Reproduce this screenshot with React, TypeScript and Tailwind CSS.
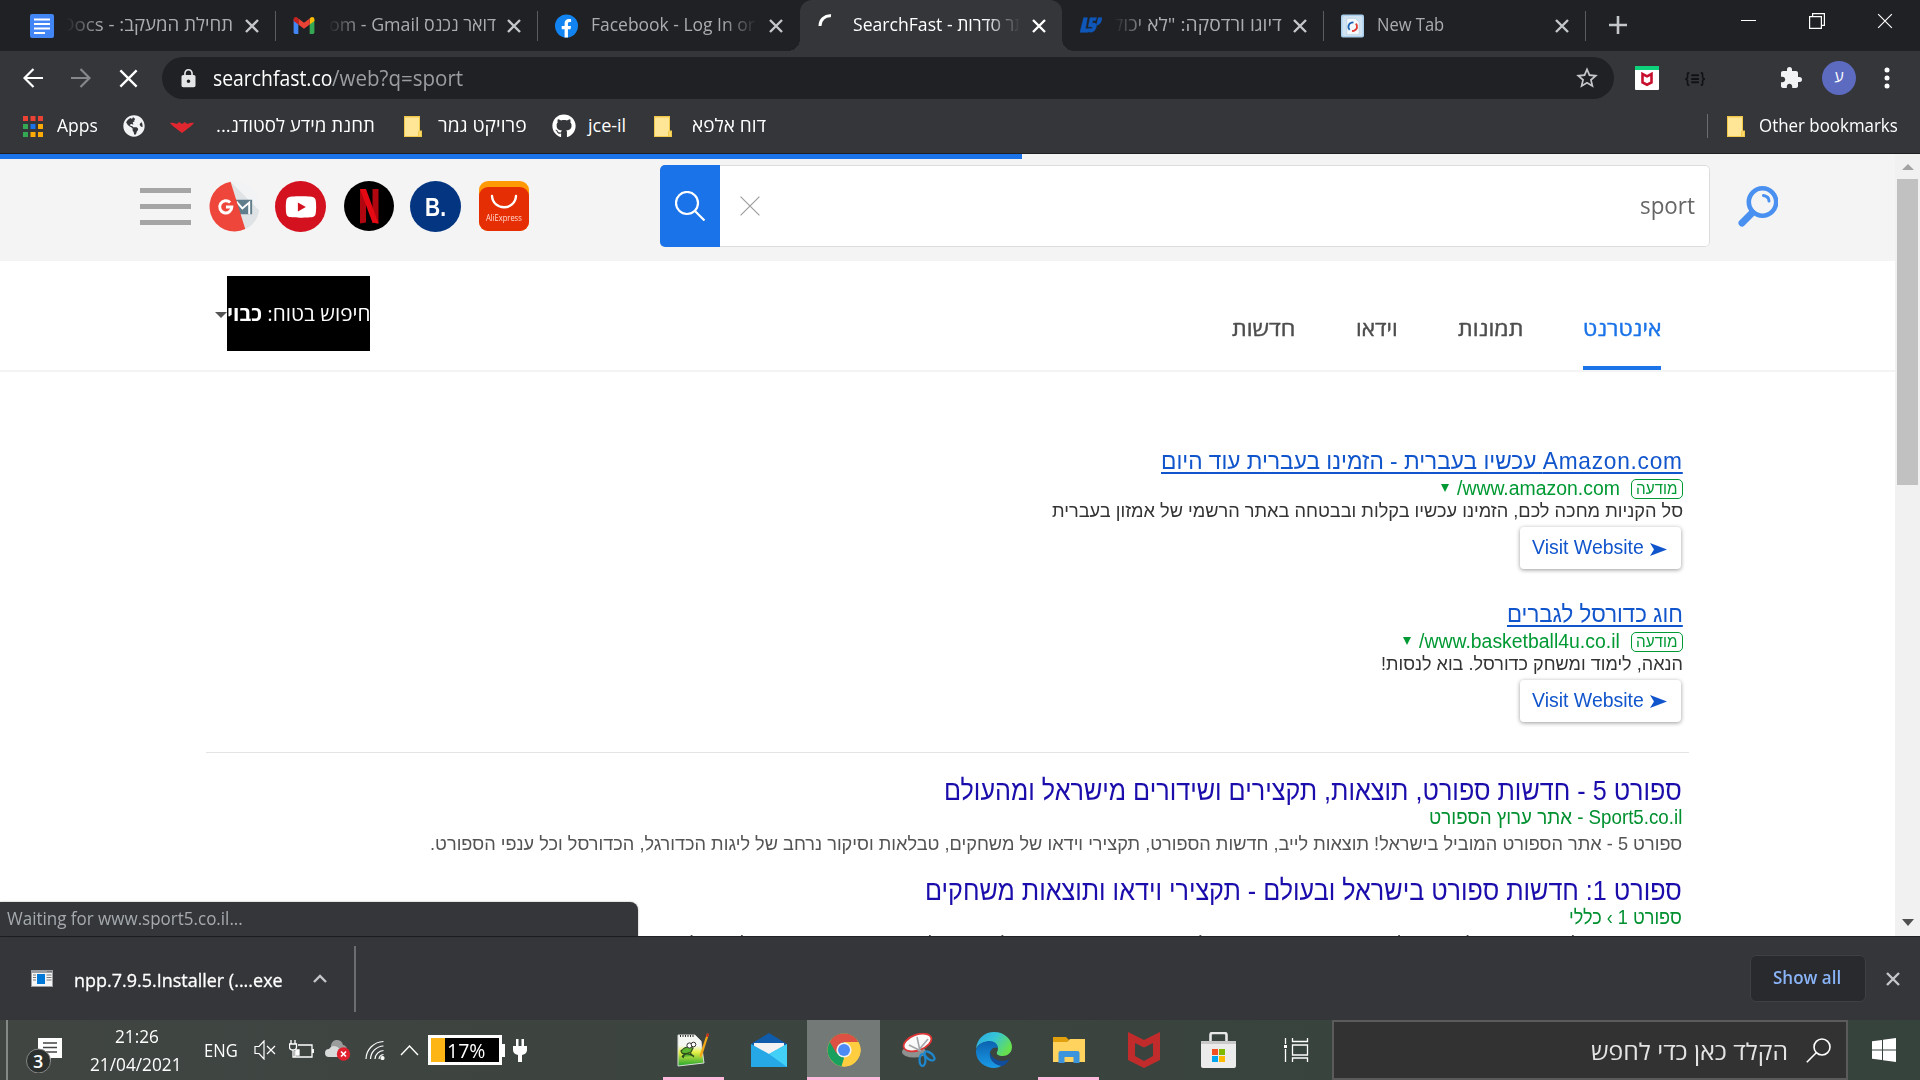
import React, { useLayoutEffect, useRef, useState } from "react";
import { FaGithub, FaGlobeAmericas, FaYoutube } from "react-icons/fa";
import { MdExtension, MdStarBorder, MdLock } from "react-icons/md";

type FitProps = { className: string; rtl?: boolean; children: React.ReactNode };

/* A single line of text squeezed or stretched to fill the width of its box. */
function Fit({ className, rtl, children }: FitProps) {
  const box = useRef<HTMLDivElement>(null);
  const line = useRef<HTMLSpanElement>(null);
  const [scale, setScale] = useState(1);
  useLayoutEffect(() => {
    if (box.current && line.current) {
      setScale(box.current.clientWidth / line.current.offsetWidth);
    }
  }, []);
  return (
    <div ref={box} dir={rtl ? "rtl" : "ltr"} className={"flex shrink-0 whitespace-pre " + className}>
      <span
        ref={line}
        className={rtl ? "shrink-0 origin-right" : "shrink-0 origin-left"}
        style={{ transform: `scaleX(${scale})` }}
      >
        {children}
      </span>
    </div>
  );
}

const UI = "font-['Open_Sans','DejaVu_Sans',sans-serif]";
const ARIAL = "font-['Liberation_Sans',Arial,sans-serif]";

function Cross({ className, w = 2.4 }: { className: string; w?: number }) {
  return (
    <svg viewBox="0 0 14 14" className={className} fill="none" stroke="currentColor" strokeWidth={w}>
      <path d="M1 1 13 13M13 1 1 13" />
    </svg>
  );
}

/* ---------- Tab strip ---------- */

function DocsIcon() {
  return (
    <svg viewBox="0 0 24 24" className="size-6">
      <rect width="24" height="24" rx="2" fill="#4285f4" />
      <path d="M4 5.500h16M4 10h16M4 14.500h16M4 19h11" stroke="#fff" strokeWidth="2.200" />
    </svg>
  );
}
function GmailIcon() {
  return (
    <svg viewBox="0 0 24 18" className="h-[17px] w-6">
      <path d="M1 3v13.500a1.500 1.500 0 0 0 1.500 1.500H6V7z" fill="#4285f4" />
      <path d="M18 7v11h3.500a1.500 1.500 0 0 0 1.500-1.500V3z" fill="#34a853" />
      <path d="M18 1.500V8l5-3.800V2.500C23 .2 20.400-.6 18.900.7z" fill="#fbbc04" />
      <path d="M6 8V1.500L12 6l6-4.500V8l-6 4.500z" fill="#ea4335" />
      <path d="M1 2.500v1.700L6 8V1.500L5.100.7C3.600-.6 1 .2 1 2.500z" fill="#c5221f" />
    </svg>
  );
}
function FacebookIcon() {
  return (
    <svg viewBox="0 0 24 24" className="ml-px size-6">
      <circle cx="12" cy="12" r="12" fill="#1184f2" />
      <path d="M10 24v-8.500H7V12h3V9.300C10 6.300 11.800 4.700 14.500 4.700c1.300 0 2.300.2 2.300.2v3h-1.500c-1.500 0-1.800.9-1.800 1.800V12h3.200l-.5 3.500h-2.700V24z" fill="#fff" />
    </svg>
  );
}
function Sport5Icon() {
  return (
    <svg viewBox="0 0 24 18" className="mb-px ml-[2px] h-[20px] w-6">
      <path d="M4 1h4L6 13h4l-1 4H0zM11 1h7l-1 3h-3l-1 3c5-1 6 2 4 6-1 3-5 5-8 3l1-3c4 1 5-2 1-2H9zM20 1h4c-1 6-3 8-6 8l1-4z" fill="#0f57b8" stroke="#0f57b8" strokeWidth=".6" />
    </svg>
  );
}
function PageIcon() {
  return (
    <svg viewBox="0 0 24 24" className="ml-px size-6">
      <rect width="24" height="24" rx="2" fill="#a9cfec" />
      <rect x="1.500" y="1.500" width="21" height="21" rx="2" fill="#cfe3f3" />
      <path d="M6 4h9l4 4v13H6z" fill="#f3f8fc" stroke="#b3cde0" strokeWidth=".7" />
      <path d="M9 16a4.500 4.500 0 0 1 2-7.500l2-.3" fill="none" stroke="#1c63b5" strokeWidth="2" />
      <path d="M15.500 9.500a4.500 4.500 0 0 1-2 7.500l-2 .3" fill="none" stroke="#e03a2f" strokeWidth="2" />
    </svg>
  );
}

type TabProps = { icon: React.ReactNode; active?: boolean; divider?: boolean; children: React.ReactNode };

function Tab({ icon, active, divider, children }: TabProps) {
  return (
    <div
      className={
        active
          ? "relative flex h-[51px] w-[262px] items-center rounded-t-xl bg-[#35363a] pl-4 text-white"
          : "relative flex h-[51px] w-[262px] items-center pl-4 text-[#a9adb1]"
      }
    >
      <div className="flex w-6 shrink-0 justify-center">{icon}</div>
      <div className="mb-[2px] ml-3 h-[30px] w-[168px] overflow-hidden text-[18px] leading-[28px]">{children}</div>
      <Cross className={active ? "ml-[12px] size-[14px] text-white" : "ml-[11px] size-[14px] text-[#c4c7ca]"} />
      {divider && <div className="absolute top-[11px] right-0 h-[30px] w-px bg-[#5a5c60]" />}
      {active && (
        <>
          <div className="absolute bottom-0 -left-3 size-3 bg-[radial-gradient(circle_at_0_0,transparent_12px,#35363a_12px)]" />
          <div className="absolute -right-3 bottom-0 size-3 bg-[radial-gradient(circle_at_100%_0,transparent_12px,#35363a_12px)]" />
        </>
      )}
    </div>
  );
}

const FADE_L = "flex justify-end [mask-image:linear-gradient(to_right,transparent,black_36px)]";
const FADE_R = "flex justify-start [mask-image:linear-gradient(to_left,transparent,black_36px)]";

function TabStrip() {
  return (
    <div className="flex h-[51px] bg-[#202124] pl-[14px]">
      <Tab icon={<DocsIcon />} divider>
        <div className={FADE_L}>
          <Fit rtl className="mr-px w-[172px]">תחילת המעקב: - Docs</Fit>
        </div>
      </Tab>
      <Tab icon={<GmailIcon />} divider>
        <div className={FADE_L}>
          <Fit rtl className="w-[167px]">דואר נכנס om - Gmail</Fit>
        </div>
      </Tab>
      <Tab icon={<FacebookIcon />}>
        <div className={FADE_R}>
          <Fit className="ml-px w-[164px]">Facebook - Log In or</Fit>
        </div>
      </Tab>
      <Tab
        active
        icon={
          <svg viewBox="0 0 24 24" className="size-6" fill="none" stroke="#fff" strokeWidth="3">
            <path d="M4 12A10 10 0 0 1 15 1.800" />
          </svg>
        }
      >
        <div className={FADE_R}>
          <Fit className="ml-px w-[183px]">SearchFast - אתר סדרות</Fit>
        </div>
      </Tab>
      <Tab icon={<Sport5Icon />} divider>
        <div className={FADE_L}>
          <Fit rtl className="w-[168px]">דיוגו ורדסקה: &quot;לא יכול</Fit>
        </div>
      </Tab>
      <Tab icon={<PageIcon />} divider>
        <Fit className="ml-px w-[67px]">New Tab</Fit>
      </Tab>
      <svg viewBox="0 0 18 18" className="mt-4 ml-[23px] size-[18px]" stroke="#c4c7ca" strokeWidth="2.600">
        <path d="M9 0v18M0 9h18" />
      </svg>
      <div className="mt-5 ml-[114px] h-px w-[15px] bg-white" />
      <svg viewBox="0 0 16 16" className="mt-[13px] ml-[53px] size-4" fill="none" stroke="#fff" strokeWidth="1.200">
        <path d="M.6 3.600h11.800v11.800H.6zM3.600 3.600V.6h11.800v11.800h-3" />
      </svg>
      <Cross w={1} className="mt-[13px] ml-[52px] size-4 text-white" />
    </div>
  );
}

/* ---------- Toolbar ---------- */

function Toolbar() {
  return (
    <div className="flex h-[54px] items-center text-white">
      <svg viewBox="0 0 20 20" className="ml-[23px] size-5" fill="none" stroke="#fff" strokeWidth="2.200">
        <path d="M20 10H2M10.500 1 1.500 10l9 9" />
      </svg>
      <svg viewBox="0 0 20 20" className="ml-[28px] size-5" fill="none" stroke="#85878a" strokeWidth="2.200">
        <path d="M0 10h18M9.500 1l9 9-9 9" />
      </svg>
      <Cross w={1.7} className="ml-[28px] size-[19px]" />
      <div className="ml-[24px] flex h-[42px] w-[1452px] items-center rounded-full bg-[#202124]">
        <MdLock className="ml-[16px] size-[21px] text-[#e3e5e7]" />
        <Fit className="ml-[14px] w-[119px] text-[21px] leading-[40px]">searchfast.co</Fit>
        <Fit className="w-[131px] text-[21px] leading-[40px] text-[#9a9ea3]">/web?q=sport</Fit>
        <MdStarBorder className="mr-[14px] ml-auto size-[26px] text-[#c4c7ca]" />
      </div>
      <svg viewBox="0 0 24 24" className="ml-[21px] size-6">
        <rect width="24" height="24" rx="1" fill="#fff" />
        <path d="M0 0h24v4H0z" fill="#0ed17c" />
        <path d="M7.500 8v8.500l4.500 2.200 4.500-2.200V8L12 10.400z" fill="none" stroke="#c8102e" strokeWidth="2.600" />
      </svg>
      <Fit className="ml-[26px] w-5 text-[16px] leading-6 font-bold text-[#111214]">{"{≡}"}</Fit>
      <MdExtension className="ml-[74px] size-6 text-[#f1f3f4]" />
      <div className="ml-[19px] flex size-[34px] items-center justify-center rounded-full bg-[#5c6bc0] pb-1 text-[16px] leading-none">ע</div>
      <svg viewBox="0 0 6 22" className="ml-[28px] h-[22px] w-[6px]" fill="#fff">
        <circle cx="3" cy="3" r="2.500" />
        <circle cx="3" cy="11" r="2.500" />
        <circle cx="3" cy="19" r="2.500" />
      </svg>
    </div>
  );
}

function Folder({ className }: { className: string }) {
  return (
    <svg viewBox="0 0 18 21" className={"h-[21px] w-[18px] shrink-0 " + className}>
      <path d="M0 0h16v14.500h2V21H0z" fill="#f0c94b" />
      <path d="M1 1.500h14v13L14 16v4H1z" fill="#ffe596" />
      <path d="M15 15.500h2V20h-2z" fill="#fbd968" />
    </svg>
  );
}

const APP_DOTS = ["#ea4335", "#ea4335", "#ea4335", "#34a853", "#1a73e8", "#fbab04", "#34a853", "#fbab04", "#fbab04"];

function Bookmarks() {
  return (
    <div className="flex h-[48px] items-center pb-[8px] text-[18px] leading-[28px] text-white">
      <svg viewBox="0 0 20 21" className="mt-[2px] ml-[23px] h-[21px] w-5">
        {APP_DOTS.map((c, i) => (
          <rect key={i} x={(i % 3) * 7.5} y={Math.floor(i / 3) * 8} width="5" height="5" fill={c} />
        ))}
      </svg>
      <Fit className="ml-[14px] w-[41px]">Apps</Fit>
      <FaGlobeAmericas className="mt-[2px] ml-[25px] size-[22px] text-[#f1f3f4]" />
      <svg viewBox="0 0 24 12" className="mt-[3px] ml-[25px] h-3 w-6">
        <path d="M0 2c4-1 6 1 7 1l2-2 3 2 3-2 2 2c1 0 3-2 7-1-2 3-6 5-8 7l-4 3-4-3C6 7 2 5 0 2z" fill="#e0262e" />
      </svg>
      <Fit rtl className="ml-[22px] w-[159px]">תחנת מידע לסטודנ...</Fit>
      <Folder className="mt-[2px] ml-[29px]" />
      <Fit rtl className="ml-4 w-[89px]">פרויקט גמר</Fit>
      <FaGithub className="mt-[2px] ml-[25px] size-6" />
      <Fit className="ml-[12px] w-[38px]">jce-il</Fit>
      <Folder className="mt-[2px] ml-[28px]" />
      <Fit rtl className="ml-[20px] w-[74px]">דוח אלפא</Fit>
      <div className="mt-[2px] ml-auto h-6 w-px bg-[#6b6d70]" />
      <Folder className="mt-[2px] ml-[19px]" />
      <Fit className="mr-[22px] ml-[14px] w-[139px]">Other bookmarks</Fit>
    </div>
  );
}

/* ---------- Page ---------- */

function SiteHeader() {
  return (
    <div className="flex h-[107px] items-start bg-[#f4f4f4]">
      <div className="mt-[34px] ml-[140px] flex w-[51px] flex-col gap-[11px]">
        <div className="h-[5px] bg-[#a5a5a5]" />
        <div className="h-[5px] bg-[#a5a5a5]" />
        <div className="h-[5px] bg-[#a5a5a5]" />
      </div>
      <svg viewBox="0 0 52 52" className="mt-[27px] ml-[18px] size-[51px]">
        <circle cx="26" cy="26" r="25.500" fill="#f1f3f4" />
        <path d="m22 .8 29 29a25.500 25.500 0 0 1-14 19.500z" fill="#dfe3e6" />
        <path d="M27 19h17v15H31z" fill="#607d8b" />
        <path d="m28 21 6 7 7-6v12" fill="none" stroke="#fff" strokeWidth="2" />
        <path d="M22 .8A25.500 25.500 0 1 0 37 49z" fill="#ee463a" />
        <path d="M21.500 22a6.200 6.200 0 1 0 1.800 4.500h-6" fill="none" stroke="#fff" strokeWidth="3" />
      </svg>
      <div className="mt-[27px] ml-[15px] flex size-[51px] items-center justify-center rounded-full bg-[#d4111f]">
        <FaYoutube className="size-[32px] text-white" />
      </div>
      <svg viewBox="0 0 50 50" className="mt-[27px] ml-[18px] size-[50px]">
        <circle cx="25" cy="25" r="25" />
        <path d="M16 8h6v33.500l-6 1zM28.500 8h6v34.500l-6-1z" fill="#b0060f" />
        <path d="M16 8h6l12.500 34.500-6-.8z" fill="#e50914" />
      </svg>
      <div className={"mt-[27px] ml-4 flex size-[51px] items-center justify-center rounded-full bg-[#043580] text-white " + ARIAL}>
        <Fit className="w-[21px] text-[25px] leading-[30px] font-bold">B.</Fit>
      </div>
      <div className="mt-[27px] ml-[18px] flex size-[50px] flex-col rounded-[9px] bg-[#ff9a05] pt-[6px]">
        <div className="flex flex-1 flex-col items-center rounded-[9px] bg-[#e62e04]">
          <svg viewBox="0 0 28 16" className="mt-[7px] h-4 w-7" fill="none" stroke="#fff" strokeWidth="2.400" strokeLinecap="round">
            <path d="M2 2c1 15 23 15 24 0" />
          </svg>
          <Fit className="mt-[2px] w-9 text-[9px] leading-[12px] text-[#ffd9d0]">AliExpress</Fit>
        </div>
      </div>
      <div className="mt-[11px] ml-[131px] flex h-[82px] w-[1050px] overflow-hidden rounded-[5px]">
        <div className="flex w-[60px] items-center justify-center bg-[#1a73e8]">
          <svg viewBox="0 0 30 30" className="size-[30px]" fill="none" stroke="#fff" strokeWidth="2.200">
            <circle cx="12" cy="12" r="11" />
            <path d="m19.500 19.500 10 10" />
          </svg>
        </div>
        <div className="flex flex-1 items-center rounded-r-[5px] border border-l-0 border-[#dcdcdc] bg-white">
          <Cross w={0.8} className="ml-[19px] size-[22px] text-[#a0a0a0]" />
          <Fit className="mr-[14px] mb-[2px] ml-auto w-[55px] text-[24px] leading-[34px] text-[#666]">sport</Fit>
        </div>
      </div>
      <svg viewBox="0 0 40 41" className="mt-8 ml-[28px] h-[41px] w-10" fill="none" stroke="#4a90f0" strokeLinecap="round">
        <circle cx="24.500" cy="16" r="13.700" strokeWidth="4.600" />
        <path d="M25.500 9.500q5.500 1 5.500 5.500" strokeWidth="3" />
        <path d="m14 27-10 10" strokeWidth="7" />
      </svg>
    </div>
  );
}

function PageNav() {
  return (
    <div dir="rtl" className="flex h-[111px] items-start border-b-2 border-[#f4f4f4] pr-[234px] text-[21px] text-[#4d4d4d]">
      <div className="flex h-[109px] w-[78px] items-end border-b-4 border-[#1a73e8] pb-[23px] text-[#1a73e8]">
        <Fit rtl className="w-[78px] leading-[30px] [-webkit-text-stroke:0.4px]">אינטרנט</Fit>
      </div>
      <Fit rtl className="mt-[52px] mr-[60px] w-[65px] leading-[30px] [-webkit-text-stroke:0.4px]">תמונות</Fit>
      <Fit rtl className="mt-[52px] mr-[60px] w-[42px] leading-[30px] [-webkit-text-stroke:0.4px]">וידאו</Fit>
      <Fit rtl className="mt-[52px] mr-[61px] w-[63px] leading-[30px] [-webkit-text-stroke:0.4px]">חדשות</Fit>
      <div className="mt-[15px] mr-auto flex h-[75px] w-[143px] items-center bg-black text-white">
        <Fit rtl className="w-[143px] text-[20px] leading-[28px]">
          חיפוש בטוח: <b>כבוי</b>
        </Fit>
      </div>
      <svg viewBox="0 0 12 6" className="mt-[51px] ml-[215px] h-[6px] w-3" fill="#555">
        <path d="M0 0h12L6 6z" />
      </svg>
    </div>
  );
}

type AdProps = { title: React.ReactNode; url: React.ReactNode; text: React.ReactNode };

function Ad({ title, url, text }: AdProps) {
  return (
    <div className="flex h-[153px] flex-col items-start text-[#1155cc]">
      {title}
      <div className="mt-[1px] flex h-[26px] items-center text-[#009933]">
        <div className="flex h-5 w-[52px] items-center justify-center rounded-[5px] border-[1.5px] border-[#009933]">
          <Fit rtl className="w-[41px] text-[16px] leading-[18px]">מודעה</Fit>
        </div>
        {url}
        <svg viewBox="0 0 8 8" className="mr-2 mb-[2px] size-2" fill="#009933">
          <path d="M0 0h8L4 8z" />
        </svg>
      </div>
      {text}
      <div dir="ltr" className="mt-[5px] mr-[2px] flex h-[42px] w-[161px] items-center rounded-[4px] bg-white pl-3 shadow-[0_1px_4px_rgba(0,0,0,0.4)]">
        <Fit className="w-[112px] pb-[2px] text-[20px] leading-6">Visit Website</Fit>
        <svg viewBox="0 0 17 13" className="mt-[2px] ml-[6px] h-[13px] w-[17px]" fill="#1155cc">
          <path d="m0 0 17 6.500L0 13l4-6.500z" />
        </svg>
      </div>
    </div>
  );
}

function Results() {
  return (
    <div dir="rtl" className={"flex flex-1 flex-col items-start overflow-hidden pt-[75px] " + ARIAL}>
      <div className="mr-[212px] flex h-[305px] flex-col">
        <Ad
          title={
            <Fit rtl className="w-[522px] text-[24px] leading-[28px] underline decoration-2 underline-offset-[3px]">
              <span className="tracking-[0.8px]">Amazon.com</span> עכשיו בעברית - הזמינו בעברית עוד היום
            </Fit>
          }
          url={<Fit rtl className="mr-[11px] w-[163px] pb-[2px] text-[20px] leading-6">www.amazon.com/</Fit>}
          text={<Fit rtl className="-mt-[2px] w-[631px] text-[19px] leading-[22px] text-[#333]">סל הקניות מחכה לכם, הזמינו עכשיו בקלות ובבטחה באתר הרשמי של אמזון בעברית</Fit>}
        />
        <Ad
          title={<Fit rtl className="w-[176px] text-[24px] leading-[28px] underline decoration-2 underline-offset-[3px]">חוג כדורסל לגברים</Fit>}
          url={<Fit rtl className="mr-[11px] w-[201px] pb-[2px] text-[20px] leading-6">www.basketball4u.co.il/</Fit>}
          text={<Fit rtl className="-mt-[2px] w-[302px] text-[19px] leading-[22px] text-[#333]">הנאה, לימוד ומשחק כדורסל. בוא לנסות!</Fit>}
        />
      </div>
      <div className="mr-[206px] h-px w-[1483px] shrink-0 bg-[#e4e4e4]" />
      <div className="mr-[213px] flex flex-col items-start">
        <Fit rtl className="mt-[21px] w-[738px] text-[28px] leading-[34px] text-[#1a0dab]">ספורט 5 - חדשות ספורט, תוצאות, תקצירים ושידורים מישראל ומהעולם</Fit>
        <Fit rtl className="-mt-[2px] w-[253px] text-[20px] leading-[22px] text-[#009030]">Sport5.co.il - אתר ערוץ הספורט</Fit>
        <Fit rtl className="mt-[5px] w-[1252px] text-[19px] leading-[22px] text-[#545454]">ספורט 5 - אתר הספורט המוביל בישראל! תוצאות לייב, חדשות הספורט, תקצירי וידאו של משחקים, טבלאות וסיקור נרחב של ליגות הכדורגל, הכדורסל וכל ענפי הספורט.</Fit>
        <Fit rtl className="mt-[19px] w-[757px] text-[28px] leading-[34px] text-[#1a0dab]">ספורט 1: חדשות ספורט בישראל ובעולם - תקצירי וידאו ותוצאות משחקים</Fit>
        <Fit rtl className="-mt-[2px] w-[113px] text-[20px] leading-[22px] text-[#009030]">ספורט 1 › כללי</Fit>
        <Fit rtl className="mt-[5px] w-[1011px] text-[19px] leading-[22px] text-[#545454]">ספורט 1 - כל העדכונים, ליגת העל, NBA, תקצירי וידאו של משחקים, תוצאות וטבלאות מכל ענפי הספורט בישראל ובעולם.</Fit>
      </div>
    </div>
  );
}

/* ---------- Download shelf ---------- */

function Downloads() {
  return (
    <div className="flex h-[84px] items-center border-t border-[#202124] bg-[#35363a] text-white">
      <svg viewBox="0 0 22 17" className="ml-[31px] h-[17px] w-[22px]">
        <path d="M0 0h22v17H0z" fill="#9a9da1" />
        <path d="M1 3h20v13H1z" fill="#f5f5f5" />
        <path d="M6 4h8v10H6z" fill="#0078d7" />
        <path d="M2 5h3M2 7.500h3M2 10h3M15.500 5h5M15.500 7.500h5M15.500 10h5M16 1.500h5" stroke="#777" />
      </svg>
      <Fit className="mt-[3px] ml-[21px] w-[209px] text-[19px] leading-[28px] [-webkit-text-stroke:0.3px]">npp.7.9.5.Installer (....exe</Fit>
      <svg viewBox="0 0 14 9" className="ml-[30px] h-[9px] w-[14px]" fill="none" stroke="#c4c7ca" strokeWidth="2.400">
        <path d="m1 8 6-6 6 6" />
      </svg>
      <div className="ml-[27px] h-[66px] w-[2px] bg-[#6b6d70]" />
      <div className="mb-px ml-auto flex h-[47px] w-[116px] items-center justify-center rounded-md border border-[#3e4045] bg-[#292a2d] pr-[2px] pb-[2px] text-[#8ab4f8]">
        <Fit className="w-[68px] text-[18px] leading-[28px] font-semibold">Show all</Fit>
      </div>
      <Cross className="mr-5 ml-5 size-[14px] text-[#c4c7ca]" />
    </div>
  );
}

/* ---------- Taskbar ---------- */

function Tray() {
  return (
    <>
      <div className="ml-[6px] h-[60px] w-[2px] bg-[#858a87]" />
      <div className="relative ml-[18px] h-[46px] w-[38px]">
        <svg viewBox="0 0 38 46" className="h-[46px] w-[38px]">
          <path d="M12 11h24v20H25v4l-5-4h-8z" fill="#fff" />
          <path d="M17 16h14M17 20.500h14M17 25h14" stroke="#444" strokeWidth="1.300" />
          <circle cx="12.500" cy="34" r="12" fill="#2b2f2d" stroke="#888" />
        </svg>
        <span className="absolute top-[22px] left-[7px] text-[18px] leading-6 font-semibold">3</span>
      </div>
      <div className="ml-[26px] flex w-[92px] flex-col items-center text-[18px] leading-7">
        <Fit className="ml-px w-11">21:26</Fit>
        <Fit className="w-[92px]">21/04/2021</Fit>
      </div>
      <Fit className="ml-[22px] w-[34px] text-[18px] leading-7">ENG</Fit>
      <svg viewBox="0 0 22 20" className="ml-[16px] h-5 w-[22px]" fill="none" stroke="#fff" strokeWidth="1.200">
        <path d="M1 6.500h4L10 1v18l-5-5.500H1zM13 6l8 8M21 6l-8 8" />
      </svg>
      <svg viewBox="0 0 25 20" className="ml-[13px] h-5 w-[25px]" fill="none" stroke="#fff" strokeWidth="1.300">
        <path d="M9 5h14v12H6v-6M24.300 9v4M2 0v4M6 0v4M.5 4h7v3q0 3-3.500 3T.5 7zM4 10v7h3" />
        <path d="M7 10h3v5H7z" fill="#fff" />
      </svg>
      <svg viewBox="0 0 26 22" className="ml-[11px] h-[22px] w-[26px]">
        <path d="M6 8a6 6 0 0 1 12-2 5 5 0 0 1 4 5v5H6z" fill="#9b9d9c" />
        <path d="M4 18a4 4 0 0 1 0-8 6 6 0 0 1 11 2v6z" fill="#d9dada" />
        <circle cx="18.500" cy="15" r="6.700" fill="#e0202c" />
        <path d="m16 12.500 5 5M21 12.500l-5 5" stroke="#fff" strokeWidth="1.600" />
      </svg>
      <svg viewBox="0 0 20 20" className="ml-[14px] size-5" fill="none" stroke="#fff" strokeWidth="1.200">
        <path d="M1 19A18 18 0 0 1 18.500 1.500M5.500 19A13.500 13.500 0 0 1 18.500 6M10 19a9 9 0 0 1 8.500-8.500M14 19a5 5 0 0 1 4.500-4.500" />
        <circle cx="17.500" cy="18" r="1.500" fill="#fff" />
      </svg>
      <svg viewBox="0 0 19 11" className="ml-[15px] h-[11px] w-[19px]" fill="none" stroke="#fff" strokeWidth="1.400">
        <path d="m1 10 8.500-9L18 10" />
      </svg>
      <div className="ml-[9px] flex h-[30px] w-[74px] items-stretch border-[3px] border-white bg-black">
        <div className="w-[14px] bg-[#fdb515]" />
        <Fit className="ml-[2px] w-[38px] text-[20px] leading-[26px]">17%</Fit>
      </div>
      <div className="h-[13px] w-[3px] bg-white" />
      <svg viewBox="0 0 14 23" className="ml-[8px] h-[23px] w-[14px]" fill="#fff">
        <path d="M3 0h2.500v7h3V0H11v7h3v4q0 4-5 5v7H5v-7q-5-1-5-5V7h3z" />
      </svg>
    </>
  );
}

function AppSlot({ state, children }: { state?: "open" | "focus"; children: React.ReactNode }) {
  return (
    <div
      className={
        state === "focus"
          ? "relative flex h-[60px] w-[73px] items-center justify-center bg-[#727977]"
          : "relative flex h-[60px] w-[73px] items-center justify-center"
      }
    >
      {children}
      {state === "open" && <div className="absolute bottom-0 left-[6px] h-[3px] w-[61px] bg-[#ffb9dc]" />}
      {state === "focus" && <div className="absolute bottom-0 left-0 h-[3px] w-[73px] bg-[#ffb9dc]" />}
    </div>
  );
}

function PinnedApps() {
  return (
    <div className="ml-[130px] flex gap-[2px]">
      <AppSlot state="open">
        <svg viewBox="0 0 34 34" className="size-[34px]">
          <defs>
            <linearGradient id="grass" x1="0" y1="0" x2="0" y2="1">
              <stop offset=".35" stopColor="#f5f8f3" />
              <stop offset=".55" stopColor="#e7f046" />
              <stop offset="1" stopColor="#1fa32c" />
            </linearGradient>
          </defs>
          <path d="M1 2h17l6 6 3 22-26 3z" fill="url(#grass)" stroke="#d8dcd8" />
          <path d="M3 3h14" stroke="#333" strokeWidth="2" strokeDasharray="1 1.500" />
          <path d="M4 18q5-6 12-3l-2 4q-6 3-9 1zM5 24q2-4 6-3l6 2M8 20l-2 5M13 20l4 4" fill="#5cb531" stroke="#2d4a1b" strokeWidth="1.200" />
          <circle cx="12.500" cy="12.500" r="2.600" fill="#fff" stroke="#333" />
          <circle cx="16.500" cy="11.500" r="2.300" fill="#fff" stroke="#333" />
          <path d="m32 1-7 22-2 2-.3-3L30 .5z" fill="#f0a818" />
          <path d="m30 .5 2 .5-1 3-2-.5z" fill="#c22" />
        </svg>
      </AppSlot>
      <AppSlot>
        <svg viewBox="0 0 36 34" className="mb-px h-[34px] w-9">
          <path d="M0 11 18 0l18 11v8H0z" fill="#0f5cad" />
          <path d="M3 10h30v12H3z" fill="#f2f2f2" />
          <path d="m0 11 18 10 18-10v23H0z" fill="#27a8e6" />
          <path d="M36 11 18 21l18 13z" fill="#42d0f7" />
        </svg>
      </AppSlot>
      <AppSlot state="focus">
        <svg viewBox="0 0 34 34" className="size-[34px]">
          <circle cx="17" cy="17" r="16.500" fill="#ffcd40" />
          <path d="M2.800 8.700A16.500 16.500 0 0 1 31.400 9H17v16L14.500 33.300A16.500 16.500 0 0 1 2.800 8.700z" fill="#18a05e" />
          <path d="M9.500 20.500 2.800 8.700A16.500 16.500 0 0 1 31.400 9H17q-6 2-7.500 11.500z" fill="#dd5144" />
          <path d="M24 21 15.500 33.500A16.500 16.500 0 0 0 31.400 9H17l5 2z" fill="#ffcd40" />
          <circle cx="17" cy="17" r="7.600" fill="#f2f2f2" />
          <circle cx="17" cy="17" r="6" fill="#4c8bf5" />
        </svg>
      </AppSlot>
      <AppSlot>
        <svg viewBox="0 0 34 34" className="size-[34px]">
          <ellipse cx="12" cy="19" rx="12" ry="5.500" fill="#8d9190" />
          <ellipse cx="15.500" cy="9.500" rx="14.500" ry="7.800" transform="rotate(-20 15.500 9.500)" fill="#fafafa" stroke="#dc3535" strokeWidth="1.800" />
          <path d="m15 4 3 14M26 6 16 18M7 12l12 6" stroke="#a2a6a8" strokeWidth="1.600" />
          <ellipse cx="20.500" cy="27" rx="3" ry="6" fill="none" stroke="#1e88cf" strokeWidth="2.200" />
          <ellipse cx="27.500" cy="23" rx="3" ry="6" transform="rotate(-50 27.500 23)" fill="none" stroke="#1e88cf" strokeWidth="2.200" />
        </svg>
      </AppSlot>
      <AppSlot>
        <svg viewBox="0 0 36 36" className="size-9">
          <defs>
            <linearGradient id="edgeTop" x1="0" y1="0" x2="1" y2=".5">
              <stop offset="0" stopColor="#2aa8e0" />
              <stop offset=".5" stopColor="#36c4d8" />
              <stop offset="1" stopColor="#66e04f" />
            </linearGradient>
            <linearGradient id="edgeSwirl" x1="0" y1="0" x2="0" y2="1">
              <stop offset="0" stopColor="#0b63b0" />
              <stop offset="1" stopColor="#1a9be8" />
            </linearGradient>
          </defs>
          <path d="M0 17C1 6 9 0 18 0c11 0 18 8 18 15 0 6-5 9-9 9-5 0-7-2-6-4 3-4-1-10-7-10C8 9 2 12 0 17z" fill="url(#edgeTop)" />
          <path d="M0 18C2 11 9 9 14 9c4 0 8 3 8 7-6-2-9 4-8 8 1 6 7 10 13 9-3 2-6 3-9 3C8 36-1 28 0 18z" fill="url(#edgeSwirl)" />
          <path d="M14 20c-1 7 5 14 13 14 3-2 5-4 6.500-7-7 4-17 2-19.500-7z" fill="#114d9d" />
        </svg>
      </AppSlot>
      <AppSlot state="open">
        <svg viewBox="0 0 32 26" className="h-[26px] w-8">
          <path d="M0 0h13l3 3-3 4H0z" fill="#e2a10c" />
          <path d="M0 5h14l3-3h15v23H0z" fill="#ffd35e" />
          <path d="M5.500 26V16q0-2 2-2h17q2 0 2 2v10h-6v-6h-9v6z" fill="#3c94dc" />
        </svg>
      </AppSlot>
      <AppSlot>
        <svg viewBox="0 0 32 36" className="h-9 w-8">
          <path d="m0 0 16 8L32 0v28l-16 8-16-8zM7 11v13l9 5 9-5V11l-9 4.500z" fill="#c12b2b" fillRule="evenodd" />
        </svg>
      </AppSlot>
      <AppSlot>
        <svg viewBox="0 0 35 36" className="h-9 w-[35px]">
          <path d="M9.500 12V3q0-2 2-2h12q2 0 2 2v9" fill="none" stroke="#e8e8e8" strokeWidth="2.600" />
          <path d="M0 9h35v25q0 2-2 2H2q-2 0-2-2z" fill="#ececec" />
          <path d="M0 9h35v3H0z" fill="#c9c9c9" />
          <path d="M11 17h6v6h-6z" fill="#f25022" />
          <path d="M18 17h6v6h-6z" fill="#7fba00" />
          <path d="M11 24h6v6h-6z" fill="#00a4ef" />
          <path d="M18 24h6v6h-6z" fill="#ffb900" />
        </svg>
      </AppSlot>
    </div>
  );
}

function Taskbar() {
  return (
    <div className="flex h-[60px] items-center bg-linear-to-r from-[#404542] via-[#3b443f] to-[#36423c] text-white">
      <Tray />
      <PinnedApps />
      <svg viewBox="0 0 25 24" className="ml-[29px] h-6 w-[25px]" fill="none" stroke="#fff" strokeWidth="1.300">
        <path d="M1.500 0v6M1.500 11v13M8.500 0v3.500h15V0M8.500 24v-4h15v4M8.500 7h15v10h-15z" />
        <path d="M0 7h3v3H0z" fill="#fff" stroke="none" />
      </svg>
      <div className="ml-auto flex h-[60px] w-[516px] items-center border-2 border-[#5b5b5b] bg-[#323232]">
        <Fit rtl className="ml-auto w-[197px] pt-[2px] text-[23px] leading-[32px] text-[#e4e4e4]">הקלד כאן כדי לחפש</Fit>
        <svg viewBox="0 0 25 25" className="mr-[15px] ml-[18px] size-[25px]" fill="none" stroke="#fff" strokeWidth="1.600">
          <circle cx="16" cy="9" r="8" />
          <path d="M10.500 14.500.8 24.200" />
        </svg>
      </div>
      <svg viewBox="0 0 24 24" className="mr-6 ml-6 size-6" fill="#fff">
        <path d="M0 3.300 10 2v9.500H0zM11 1.800 24 0v11.500H11zM0 12.500h10V22L0 20.700zM11 12.500h13V24l-13-1.800z" />
      </svg>
    </div>
  );
}

export default function App() {
  return (
    <div className={"flex h-[1080px] w-[1920px] flex-col overflow-hidden bg-white " + UI}>
      <TabStrip />
      <div className="border-b border-[#1f2023] bg-[#35363a]">
        <Toolbar />
        <Bookmarks />
      </div>
      <div className="relative flex min-h-0 flex-1">
        <div className="flex min-w-0 flex-1 flex-col">
          <SiteHeader />
          <PageNav />
          <Results />
        </div>
        <div className="flex w-[25px] flex-col items-center bg-[#f1f1f1]">
          <svg viewBox="0 0 12 6" className="mt-[10px] h-[6px] w-3" fill="#a3a3a3">
            <path d="M6 0l6 6H0z" />
          </svg>
          <div className="mt-[9px] h-[306px] w-[21px] bg-[#c1c1c1]" />
          <svg viewBox="0 0 12 7" className="mt-auto mb-[10px] h-[7px] w-3" fill="#505050">
            <path d="M0 0h12L6 7z" />
          </svg>
        </div>
        <div className="absolute top-0 left-0 h-[5px] w-[1022px] bg-[#1a73e8]" />
        <div className="absolute bottom-0 left-0 flex h-[34px] w-[638px] items-center rounded-tr-lg bg-[#35363a] pb-[2px] pl-[7px] shadow-[0_0_2px_rgba(0,0,0,0.4)]">
          <Fit className="w-[236px] text-[18px] leading-7 text-[#a5aaaf]">Waiting for www.sport5.co.il...</Fit>
        </div>
      </div>
      <Downloads />
      <Taskbar />
    </div>
  );
}
